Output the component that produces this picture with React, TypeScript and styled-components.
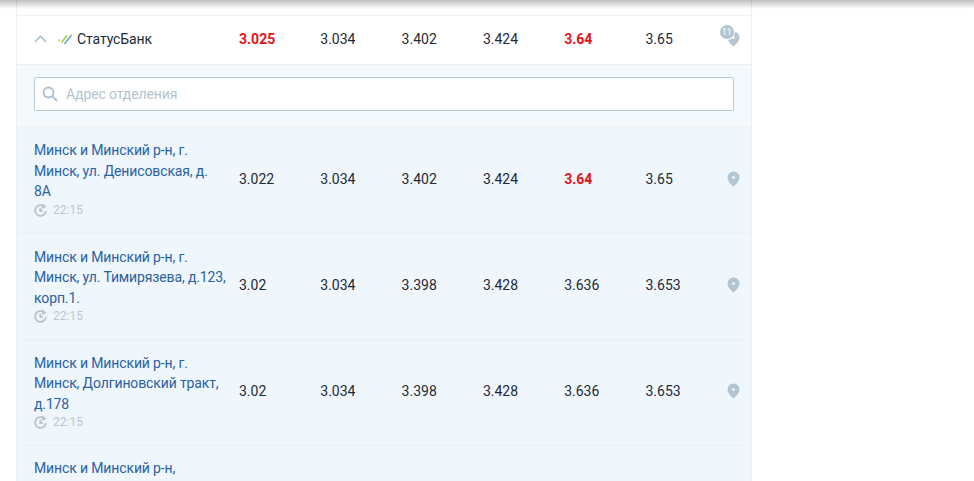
import React from "react";
import styled, { createGlobalStyle } from "styled-components";

interface Branch {
  id: number;
  address: string;
  rates: string[];
  best?: number[];
}

const branches: Branch[] = [
  {
    id: 1,
    address: "Минск и Минский р-н, г. Минск, ул. Денисовская, д. 8А",
    rates: ["3.022", "3.034", "3.402", "3.424", "3.64", "3.65"],
    best: [4],
  },
  {
    id: 2,
    address: "Минск и Минский р-н, г. Минск, ул. Тимирязева, д.123, корп.1.",
    rates: ["3.02", "3.034", "3.398", "3.428", "3.636", "3.653"],
  },
  {
    id: 3,
    address: "Минск и Минский р-н, г. Минск, Долгиновский тракт, д.178",
    rates: ["3.02", "3.034", "3.398", "3.428", "3.636", "3.653"],
  },
];

const bankRates = ["3.025", "3.034", "3.402", "3.424", "3.64", "3.65"];

const GlobalStyle = createGlobalStyle`
  html, body {
    margin: 0;
    height: 100%;
    background: #fff;
    overflow: hidden;
  }
  body {
    font-family: Roboto, "Liberation Sans", sans-serif;
    font-size: 14px;
    color: #1f2a36;
  }
`;

const Page = styled.div`
  position: relative;
  height: 481px;
  overflow: hidden;
  &::after {
    content: "";
    position: absolute;
    inset: 0 0 auto 0;
    height: 9px;
    background: linear-gradient(rgba(0, 0, 0, 0.25), rgba(0, 0, 0, 0));
  }
`;

const Panel = styled.div`
  width: 736px;
  height: 481px;
  margin-left: 16px;
  padding-top: 15px;
  box-sizing: border-box;
  background: #fff;
  border-left: 1px solid #eef1f3;
  border-right: 1px solid #eef1f3;
`;

const Row = styled.div<{ $branch?: boolean }>`
  display: grid;
  grid-template-columns: 205px repeat(6, 81.3px) 1fr;
  align-items: center;
  padding-left: 17px;
  box-sizing: border-box;
  border-top: 1px solid #eef0f2;
  background: ${(p) => (p.$branch ? "#eff6fc" : "#fff")};
  height: ${(p) => (p.$branch ? "106.3px" : "49px")};
`;

const BankName = styled.div`
  display: flex;
  align-items: center;
  gap: 11px;
  margin-bottom: 2px;
`;

const NameGroup = styled.span`
  display: flex;
  align-items: center;
  gap: 5px;
  letter-spacing: -0.1px;
  color: #1f2a36;
`;

const Rate = styled.div<{ $best?: boolean }>`
  font-weight: ${(p) => (p.$best ? 700 : 400)};
  color: ${(p) => (p.$best ? "#e4121a" : "#1f2a36")};
  margin-bottom: 2px;
`;

const SearchBar = styled.div`
  height: 62px;
  box-sizing: border-box;
  padding: 12px 17px 0;
  background: #f4f9fd;
  border-top: 1px solid #eef0f2;
`;

const SearchField = styled.div`
  display: flex;
  align-items: center;
  gap: 8px;
  width: 700px;
  height: 34px;
  box-sizing: border-box;
  padding-left: 7px;
  background: #fff;
  border: 1px solid #b9cad6;
  border-radius: 2px;
`;

const SearchInput = styled.input`
  flex: 1;
  border: 0;
  outline: 0;
  padding: 0;
  font: inherit;
  letter-spacing: -0.1px;
  color: #1f2a36;
  &::placeholder {
    color: #b4c4d0;
    opacity: 1;
  }
`;

const AddressCell = styled.div<{ $clipped?: boolean }>`
  width: 193px;
  margin-top: -1px;
  align-self: ${(p) => (p.$clipped ? "start" : "center")};
  padding-top: ${(p) => (p.$clipped ? "13px" : "0")};
`;

const AddressLink = styled.a`
  display: block;
  color: #2a62a2;
  line-height: 20.5px;
  letter-spacing: -0.13px;
  text-decoration: none;
`;

const UpdateTime = styled.div`
  display: flex;
  align-items: center;
  gap: 6px;
  margin-top: 1px;
  font-size: 12px;
  line-height: 15px;
  color: #c0c6ca;
`;

const PinCell = styled.div`
  position: relative;
  display: flex;
  justify-content: flex-end;
  padding-right: 12px;
  margin-bottom: 2px;
`;

const PinCount = styled.span`
  position: absolute;
  top: -6px;
  right: 18px;
  width: 14px;
  height: 14px;
  border-radius: 50%;
  background: #b3c5d2;
  box-shadow: 0 0 0 1px #fff;
  color: #fff;
  font-size: 9px;
  line-height: 14px;
  text-align: center;
`;

const Chevron = () => (
  <svg width="13" height="8" viewBox="0 0 13 8" fill="none" stroke="#b3c5d2" strokeWidth="1.7">
    <path d="M0.8 7l5.7-5.7L12.2 7" />
  </svg>
);

const BankLogo = () => (
  <svg width="14" height="10" viewBox="0 0 14 10" fill="none" strokeWidth="1.4">
    <path d="M0.5 5.5l1.5 1.5" stroke="#b5cf3c" />
    <path d="M3.5 8.5L9 1.5" stroke="#9ec93c" />
    <path d="M6 9.5h0.8L13.5 1" stroke="#5aa9b5" />
  </svg>
);

const SearchIcon = () => (
  <svg width="16" height="16" viewBox="0 0 16 16" fill="none" stroke="#a9bccb" strokeWidth="1.8">
    <circle cx="6.5" cy="6.5" r="5" />
    <path d="M10.2 10.2L15 15" />
  </svg>
);

const ClockIcon = () => (
  <svg width="13" height="13" viewBox="0 0 13 13" fill="none" stroke="#bcc3c8" strokeWidth="1.8">
    <path d="M11.9 7.2A5.4 5.4 0 1 1 10 2.4" />
    <path d="M8.4 0.4l2.4 2.2-2.8 1.2" />
    <path d="M6.3 3.8v3h2.6" />
  </svg>
);

const PinIcon = () => (
  <svg width="13" height="16" viewBox="0 0 13 16">
    <path
      fillRule="evenodd"
      fill="#b3c5d2"
      d="M6.5 0.5a6 6 0 0 1 6 6c0 3.6-3.6 6.8-6 9-2.4-2.2-6-5.4-6-9a6 6 0 0 1 6-6zm0 4.6a1.5 1.5 0 1 0 0 3 1.5 1.5 0 0 0 0-3z"
    />
  </svg>
);

const App = () => (
  <Page>
    <GlobalStyle />
    <Panel>
      <Row>
        <BankName>
          <Chevron />
          <NameGroup>
            <BankLogo />
            СтатусБанк
          </NameGroup>
        </BankName>
        {bankRates.map((rate, i) => (
          <Rate key={`bank_${i}`} $best={i === 0 || i === 4}>
            {rate}
          </Rate>
        ))}
        <PinCell>
          <PinIcon />
          <PinCount>11</PinCount>
        </PinCell>
      </Row>
      <SearchBar>
        <SearchField>
          <SearchIcon />
          <SearchInput placeholder="Адрес отделения" />
        </SearchField>
      </SearchBar>
      {branches.map((branch) => (
        <Row key={`branch_${branch.id}`} $branch>
          <AddressCell>
            <AddressLink href="#">{branch.address}</AddressLink>
            <UpdateTime>
              <ClockIcon />
              22:15
            </UpdateTime>
          </AddressCell>
          {branch.rates.map((rate, i) => (
            <Rate key={`rate_${i}`} $best={branch.best?.includes(i)}>
              {rate}
            </Rate>
          ))}
          <PinCell>
            <PinIcon />
          </PinCell>
        </Row>
      ))}
      <Row $branch>
        <AddressCell $clipped>
          <AddressLink href="#">Минск и Минский р-н,</AddressLink>
        </AddressCell>
      </Row>
    </Panel>
  </Page>
);

export default App;
